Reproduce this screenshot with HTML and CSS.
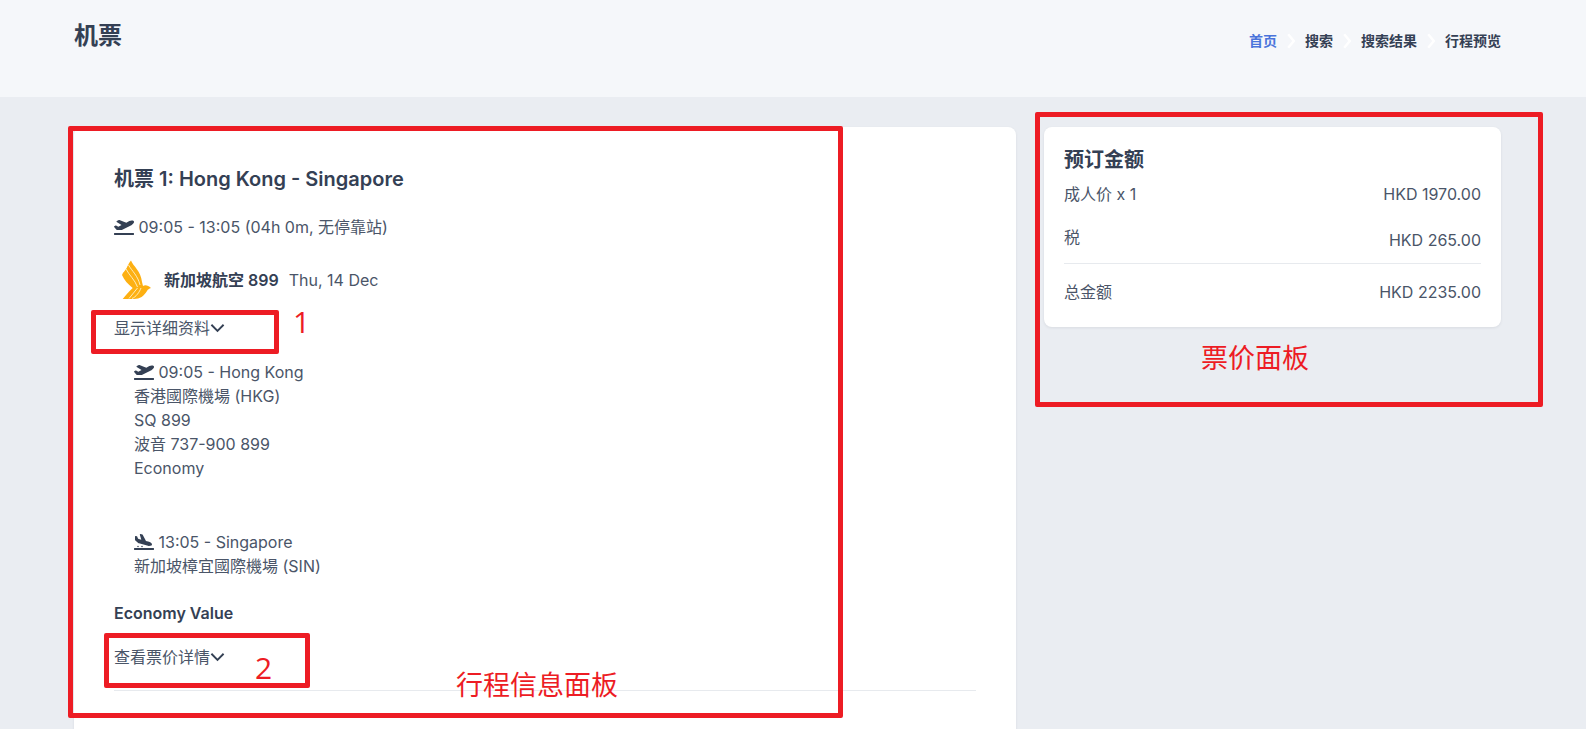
FILE: index.html
```html
<!DOCTYPE html>
<html lang="zh-CN">
<head>
<meta charset="utf-8">
<title>机票</title>
<link rel="stylesheet" href="styles.css">
</head>
<body>
<header class="top">
  <h1 class="page-title">机票</h1>
  <nav class="crumbs">
    <a class="crumb crumb-active">首页</a>
    <svg class="crumb-sep" viewBox="0 0 10 20"><path d="M1.500 1.500l7 8.500-7 8.500"/></svg>
    <a class="crumb">搜索</a>
    <svg class="crumb-sep" viewBox="0 0 10 20"><path d="M1.500 1.500l7 8.500-7 8.500"/></svg>
    <a class="crumb">搜索结果</a>
    <svg class="crumb-sep" viewBox="0 0 10 20"><path d="M1.500 1.500l7 8.500-7 8.500"/></svg>
    <a class="crumb">行程预览</a>
  </nav>
</header>
<main class="layout">
  <section class="card trip">
    <h2 class="trip-title">机票 1: Hong Kong - Singapore</h2>
    <p class="summary">
      <svg class="plane" viewBox="0 0 640 512"><path d="M624 448H16c-8.84 0-16 7.16-16 16v32c0 8.84 7.16 16 16 16h608c8.84 0 16-7.16 16-16v-32c0-8.84-7.16-16-16-16zM80.55 341.27c6.28 6.84 15.1 10.72 24.33 10.71l130.54-.18a65.62 65.62 0 0 0 29.64-7.12l290.96-147.65c26.74-13.57 50.71-32.94 67.02-58.31 18.31-28.48 20.3-49.09 13.07-63.65-7.21-14.57-24.74-25.27-58.25-27.45-29.85-1.94-59.54 5.92-86.28 19.48l-98.51 49.99-218.71-82.06a17.799 17.799 0 0 0-18-1.11L90.62 67.29c-10.67 5.41-13.25 19.65-5.17 28.53l156.22 98.1-103.21 52.38-72.35-36.47a17.804 17.804 0 0 0-16.07.02L9.91 230.22c-10.44 5.3-13.19 19.12-5.57 28.08l76.21 82.97z"/></svg>
      09:05 - 13:05 (04h 0m, 无停靠站)
    </p>
    <div class="airline">
      <svg class="logo" viewBox="0 0 30 40">
        <path class="logo-fill" d="M9 .5C11 6 19 11 20 22l1 4c2-1.500 5-1 8 2-2 1-3 1-4 3-3 5-7 8-13 8H.7c3-4 6-7 10-11C6 24 2 20 0 15c1-3 3-4 4-6 1-1 1.500-4 5-8.500z"/>
        <path class="logo-line" d="M4 9c3 6 9 11 11.500 18M6.500 5c3.500 6 9.500 11 11.500 20M15.500 28L7 38.500M19 28c-1.500 4-5 9-9 10.500"/>
      </svg>
      <strong class="airline-name">新加坡航空 899</strong>
      <span class="airline-date">Thu, 14 Dec</span>
    </div>
    <a class="toggle toggle-details">显示详细资料<svg class="chev" viewBox="0 0 16 10"><path d="M1.500 1.500L8 8l6.500-6.500"/></svg></a>
    <div class="leg leg-first">
      <div><svg class="plane" viewBox="0 0 640 512"><path d="M624 448H16c-8.84 0-16 7.16-16 16v32c0 8.84 7.16 16 16 16h608c8.84 0 16-7.16 16-16v-32c0-8.84-7.16-16-16-16zM80.55 341.27c6.28 6.84 15.1 10.72 24.33 10.71l130.54-.18a65.62 65.62 0 0 0 29.64-7.12l290.96-147.65c26.74-13.57 50.71-32.94 67.02-58.31 18.31-28.48 20.3-49.09 13.07-63.65-7.21-14.57-24.74-25.27-58.25-27.45-29.85-1.94-59.54 5.92-86.28 19.48l-98.51 49.99-218.71-82.06a17.799 17.799 0 0 0-18-1.11L90.62 67.29c-10.67 5.41-13.25 19.65-5.17 28.53l156.22 98.1-103.21 52.38-72.35-36.47a17.804 17.804 0 0 0-16.07.02L9.91 230.22c-10.44 5.3-13.19 19.12-5.57 28.08l76.21 82.97z"/></svg> 09:05 - Hong Kong</div>
      <div>香港國際機場 (HKG)</div>
      <div>SQ 899</div>
      <div>波音 737-900 899</div>
      <div>Economy</div>
    </div>
    <div class="leg leg-second">
      <div><svg class="plane" viewBox="0 0 640 512"><path d="M624 448H16c-8.84 0-16 7.16-16 16v32c0 8.84 7.16 16 16 16h608c8.84 0 16-7.16 16-16v-32c0-8.84-7.16-16-16-16zM44.810 205.660l88.740 80a62.607 62.607 0 0 0 25.470 13.930l287.600 78.350c26.480 7.210 54.560 8.720 81 1.360 29.670-8.270 43.440-21.210 47.250-35.710 3.830-14.500-1.730-32.710-23.370-54.960-19.300-19.850-44.150-32.600-70.630-39.810l-97.510-26.550L282.800 30.220c-1.510-5.810-5.950-10.350-11.660-11.910L206.050.58c-10.560-2.880-20.900 5.320-20.710 16.440l47.920 164.210-102.200-27.840-27.590-67.880c-1.930-4.890-6.010-8.570-11.020-9.930L52.720 64.750c-10.340-2.820-20.530 5-20.720 15.880l.23 101.780c.19 8.910 6.030 17.340 12.580 23.250z"/><circle cx="128" cy="400" r="24"/><circle cx="256" cy="400" r="24"/></svg> 13:05 - Singapore</div>
      <div>新加坡樟宜國際機場 (SIN)</div>
    </div>
    <div class="cabin">Economy Value</div>
    <a class="toggle toggle-fare">查看票价详情<svg class="chev" viewBox="0 0 16 10"><path d="M1.500 1.500L8 8l6.500-6.500"/></svg></a>
    <hr class="rule rule-trip">
  </section>
  <aside class="card price">
    <h3 class="price-title">预订金额</h3>
    <div class="price-row price-row-adult"><span>成人价 x 1</span><span>HKD 1970.00</span></div>
    <div class="price-row price-row-tax"><span>税</span><span class="tax-value">HKD 265.00</span></div>
    <hr class="rule">
    <div class="price-row price-row-total"><span>总金额</span><span>HKD 2235.00</span></div>
  </aside>
</main>
<div class="note-box note-trip"></div>
<div class="note-box note-one"></div>
<div class="note-box note-two"></div>
<div class="note-box note-price"></div>
<span class="note-text note-digit note-t1">1</span>
<span class="note-text note-digit note-t2">2</span>
<span class="note-text note-ttrip">行程信息面板</span>
<span class="note-text note-tprice">票价面板</span>
</body>
</html>
```
FILE: styles.css
```css
* { box-sizing: border-box; }
html, body { margin: 0; height: 729px; overflow: hidden; }
body {
  position: relative;
  background: #eaedf2;
  color: #4a5568;
  font-family: Inter, "Noto Sans CJK SC", sans-serif;
  font-size: 16px;
  line-height: 24px;
}
.top {
  height: 97px;
  background: #f5f7fa;
  padding: 0 85px 0 74px;
  display: flex;
  justify-content: space-between;
  align-items: flex-start;
}
.page-title {
  margin: 20px 0 0;
  font-size: 24px;
  line-height: 32px;
  font-weight: 700;
  color: #344054;
}
.crumbs {
  margin-top: 29px;
  display: flex;
  align-items: center;
  gap: 10px;
  font-size: 14px;
  font-weight: 600;
  color: #344054;
}
.crumb-active { color: #4a74db; }
.crumb-sep { width: 8px; height: 16px; fill: none; stroke: #fff; stroke-width: 3; }
.layout {
  padding: 30px 85px 0 74px;
  display: grid;
  grid-template-columns: 942px 457px;
  gap: 28px;
  align-items: start;
}
.card {
  background: #fff;
  border-radius: 8px;
  box-shadow: 0 1px 3px rgba(16, 24, 40, .08);
}
.trip { padding: 37px 40px 80px; min-height: 700px; }
.trip-title {
  margin: 0;
  font-size: 20px;
  line-height: 30px;
  font-weight: 600;
  color: #344054;
}
.summary { margin: 21px 0 0; }
.plane { width: 20px; height: 16px; fill: #344054; vertical-align: -2px; }
.airline { margin-top: 19px; height: 44px; display: flex; align-items: center; }
.logo { width: 30px; height: 40px; margin-left: 8px; }
.logo-fill { fill: #fdb012; }
.logo-line { fill: none; stroke: #fff3c9; stroke-width: .9; }
.airline-name { margin-left: 12px; font-weight: 600; color: #344054; }
.airline-date { margin-left: 10px; }
.toggle { display: flex; align-items: center; }
.toggle-details { margin-top: 14px; }
.chev { width: 15px; height: 10px; fill: none; stroke: #344054; stroke-width: 2; }
.leg { padding-left: 20px; }
.leg-first { margin-top: 20px; }
.leg-second { margin-top: 50px; }
.cabin { margin-top: 23px; font-weight: 600; color: #344054; }
.toggle-fare { margin-top: 20px; }
.rule { border: 0; border-top: 1px solid #e7eaee; margin: 0; }
.rule-trip { margin-top: 21px; }
.price { padding: 19px 20px 20px; height: 200px; }
.price-title {
  margin: 0;
  font-size: 20px;
  line-height: 28px;
  font-weight: 700;
  color: #344054;
}
.price-row { display: flex; justify-content: space-between; align-items: flex-start; }
.price-row-adult { margin-top: 8px; }
.price-row-tax { margin-top: 19px; height: 38px; }
.tax-value { margin-top: 3px; }
.price-row-total { margin-top: 16px; }
.note-box { position: absolute; border: 5px solid #ed1c24; border-radius: 2px; }
.note-trip { left: 68px; top: 126px; width: 775px; height: 592px; }
.note-one { left: 91px; top: 310px; width: 188px; height: 44px; }
.note-two { left: 104px; top: 633px; width: 206px; height: 55px; }
.note-price { left: 1035px; top: 112px; width: 508px; height: 295px; }
.note-text { position: absolute; color: #ed1c24; font-family: "Noto Sans CJK SC", sans-serif; font-weight: 300; line-height: 1; }
.note-digit { font-family: "Open Sans", sans-serif; font-weight: 400; }
.note-t1 { left: 293px; top: 307px; font-size: 30px; }
.note-t2 { left: 255px; top: 653px; font-size: 30px; }
.note-ttrip { left: 456px; top: 670px; font-size: 27px; font-weight: 400; }
.note-tprice { left: 1201px; top: 343px; font-size: 27px; font-weight: 400; }
```
